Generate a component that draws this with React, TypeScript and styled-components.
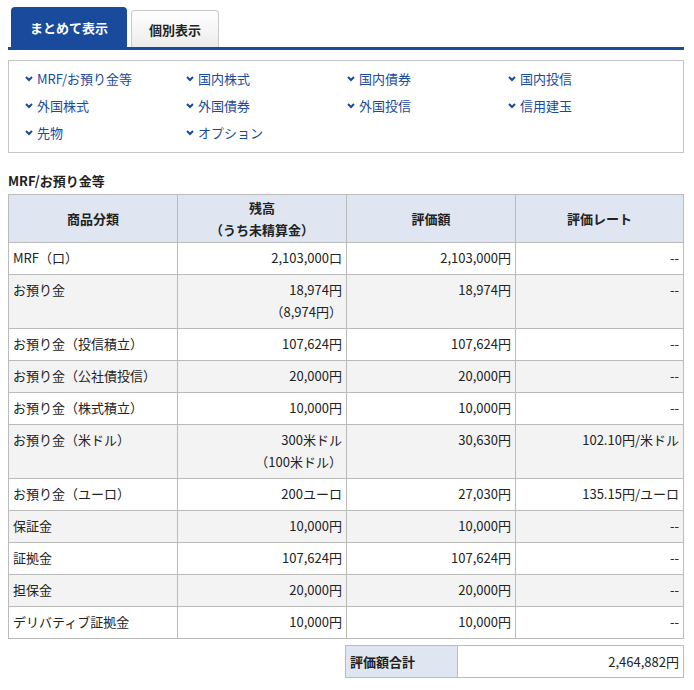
import React from "react";
import styled, { createGlobalStyle } from "styled-components";

const G = createGlobalStyle`
  body { margin: 0; background: #fff; font-family: "Noto Sans CJK JP", "Noto Sans", sans-serif; font-size: 12px; color: #222; }
`;
const Page = styled.div` padding: 7px 10px 8px 8px; width: 676px; `;
const Tabs = styled.div` display: flex; align-items: flex-end; gap: 4px; padding-left: 3px; border-bottom: 3px solid #1a4a9c; height: 40px; `;
const Tab = styled.div<{ $active?: boolean }>`
  height: ${p => (p.$active ? 40 : 37)}px; box-sizing: border-box;
  padding: 0 ${p => (p.$active ? 19 : 17)}px;
  display: flex; align-items: center; font-weight: bold; font-size: 13px;
  border-radius: 4px 4px 0 0;
  background: ${p => (p.$active ? "#1a4a9c" : "linear-gradient(#fff, #ececec)")};
  color: ${p => (p.$active ? "#fff" : "#222")};
  border: ${p => (p.$active ? "none" : "1px solid #c8c8c8")};
  border-bottom: none;
`;
const Nav = styled.div` margin-top: 10px; border: 1px solid #c4c4c4; padding: 7px 16px 8px; display: grid; grid-template-columns: repeat(4, 161px); row-gap: 5px; `;
const NavLink = styled.a` color: #1a4a9c; font-size: 13px; line-height: 22px; display: flex; align-items: center; gap: 4px; text-decoration: none; `;
const Title = styled.h2` margin: 18px 0 4px; font-size: 13px; font-weight: bold; `;
const Table = styled.table` width: 676px; border-collapse: collapse; font-size: 13px; `;
const Th = styled.th` background: #dfe6f1; border: 1px solid #bbb; font-weight: bold; height: 47px; line-height: 22px; padding: 0; `;
const Tr = styled.tr<{ $grey?: boolean }>` background: ${p => (p.$grey ? "#f3f3f3" : "#fff")}; `;
const Td = styled.td<{ $r?: boolean }>` border: 1px solid #bbb; vertical-align: top; padding: 4px 4px 5px; line-height: 22px; text-align: ${p => (p.$r ? "right" : "left")}; height: 22px; `;
const Sum = styled.table` margin: 6px 0 0 337px; width: 339px; border-collapse: collapse; font-size: 13px; `;
const SumTh = styled.td` background: #dfe6f1; border: 1px solid #bbb; font-weight: bold; width: 103px; padding: 6px 4px; `;
const SumTd = styled.td` border: 1px solid #bbb; text-align: right; padding: 6px 4px; `;

const Chev = () => (
  <svg width="8" height="6" viewBox="0 0 8 6"><path d="M1 1l3 3 3-3" stroke="#1a4a9c" strokeWidth="2" fill="none" /></svg>
);

const links = ["MRF/お預り金等", "国内株式", "国内債券", "国内投信", "外国株式", "外国債券", "外国投信", "信用建玉", "先物", "オプション"];
const rows: [string, string, string, string, string?][] = [
  ["MRF（口）", "2,103,000口", "2,103,000円", "--"],
  ["お預り金", "18,974円", "18,974円", "--", "（8,974円）"],
  ["お預り金（投信積立）", "107,624円", "107,624円", "--"],
  ["お預り金（公社債投信）", "20,000円", "20,000円", "--"],
  ["お預り金（株式積立）", "10,000円", "10,000円", "--"],
  ["お預り金（米ドル）", "300米ドル", "30,630円", "102.10円/米ドル", "（100米ドル）"],
  ["お預り金（ユーロ）", "200ユーロ", "27,030円", "135.15円/ユーロ"],
  ["保証金", "10,000円", "10,000円", "--"],
  ["証拠金", "107,624円", "107,624円", "--"],
  ["担保金", "20,000円", "20,000円", "--"],
  ["デリバティブ証拠金", "10,000円", "10,000円", "--"],
];

export default function App() {
  return (
    <Page>
      <G />
      <Tabs><Tab $active>まとめて表示</Tab><Tab>個別表示</Tab></Tabs>
      <Nav>{links.map(l => <NavLink key={l}><Chev />{l}</NavLink>)}</Nav>
      <Title>MRF/お預り金等</Title>
      <Table>
        <thead><tr><Th style={{ width: 168 }}>商品分類</Th><Th style={{ width: 168 }}>残高<br />（うち未精算金）</Th><Th style={{ width: 168 }}>評価額</Th><Th>評価レート</Th></tr></thead>
        <tbody>
          {rows.map((r, i) => (
            <Tr key={i} $grey={i % 2 === 1}>
              <Td>{r[0]}</Td>
              <Td $r>{r[1]}{r[4] && <><br />{r[4]}</>}</Td>
              <Td $r>{r[2]}</Td>
              <Td $r>{r[3]}</Td>
            </Tr>
          ))}
        </tbody>
      </Table>
      <Sum><tbody><tr><SumTh>評価額合計</SumTh><SumTd>2,464,882円</SumTd></tr></tbody></Sum>
    </Page>
  );
}
